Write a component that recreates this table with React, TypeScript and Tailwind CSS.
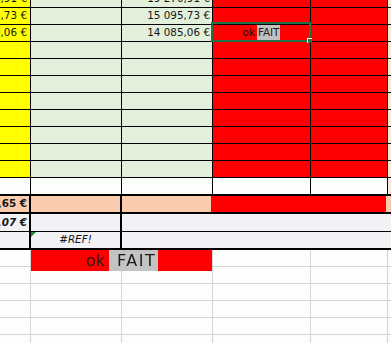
import type { ReactNode } from 'react';

type CellProps = { className?: string; children?: ReactNode };

// plain worksheet cell: fixed width, content clipped at its edges
function Cell({ className = '', children }: CellProps) {
  return (
    <div className={`h-full shrink-0 flex items-center overflow-hidden whitespace-nowrap ${className}`}>
      {children}
    </div>
  );
}

const topRows = [
  { a: '17 795,91 €', c: '19 270,91 €' },
  { a: '8 275,73 €', c: '15 095,73 €' },
  { a: '9 120,06 €', c: '14 085,06 €', selected: true },
  {}, {}, {}, {}, {}, {}, {}, {},
] as { a?: string; c?: string; selected?: boolean }[];

export default function App() {
  return (
    <div className="h-screen overflow-hidden bg-[#fcfefb] font-['DejaVu_Sans',sans-serif] text-[10.4px] text-[#161616]">
      <div className="flex flex-col -mt-[9px]">
        {/* Monthly amounts block */}
        {topRows.map((row, i) => (
          <div key={i} className="flex h-[17px] shrink-0 border-b border-black">
            <Cell className="w-[31px] border-r border-black bg-[#ffff00] justify-end pr-[3px]">{row.a}</Cell>
            <Cell className="w-[91px] border-r border-black bg-[#e2efda]" />
            <Cell className="w-[91px] border-r border-black bg-[#e2efda] justify-end pr-[2px]">{row.c}</Cell>
            <div className="relative h-full w-[98px] shrink-0 border-r border-black bg-[#ff0000] flex items-center justify-center whitespace-nowrap">
              {row.selected && (
                <>
                  <span className="text-[#1a0808]">ok</span>
                  <span className="ml-[2px] bg-[#c0c0c0] px-[1px] text-[#222]">FAIT</span>
                  <div className="absolute -left-[2px] -top-[3px] z-10 h-[20px] w-[100px] border-2 border-[#217346]" />
                  <div className="absolute left-[94px] top-[13px] z-20 h-[5px] w-[5px] border-l border-t border-white bg-[#217346]" />
                </>
              )}
            </div>
            <Cell className="w-[77px] border-r border-black bg-[#ff0000]" />
            <Cell className="flex-1 bg-[#fbe9de]" />
          </div>
        ))}

        {/* blank separator row */}
        <div className="flex h-[18px] shrink-0 border-b-2 border-black bg-[#fcfefb]">
          <Cell className="w-[31px] border-r border-black" />
          <Cell className="w-[91px] border-r border-black" />
          <Cell className="w-[91px] border-r border-black" />
          <Cell className="w-[98px] border-r border-black" />
          <Cell className="w-[77px] border-r border-black" />
          <Cell className="flex-1 bg-[#fbe9de]" />
        </div>

        {/* totals */}
        <div className="flex h-[18px] shrink-0 border-b-2 border-black bg-[#fbcbad]">
          <Cell className="w-[31px] border-r-2 border-black justify-end pr-[2px] font-bold">87 460,65 €</Cell>
          <Cell className="w-[91px] border-r-2 border-black" />
          <Cell className="w-[89px]" />
          <Cell className="w-[175px] bg-[#ff0000]" />
          <Cell className="flex-1" />
        </div>

        <div className="flex h-[18px] shrink-0 border-b border-black bg-[#f2f1f6]">
          <Cell className="w-[31px] border-r-2 border-black justify-end pr-[2px] font-bold italic">64 233,07 €</Cell>
          <Cell className="w-[91px] border-r-2 border-black" />
          <Cell className="flex-1" />
        </div>

        <div className="flex h-[18px] shrink-0 border-b-2 border-black bg-[#f2f1f6]">
          <Cell className="w-[31px] border-r-2 border-black" />
          <div className="relative h-full w-[91px] shrink-0 border-r-2 border-black flex items-center justify-center italic">
            <div className="absolute left-0 top-0 h-0 w-0 border-r-[5px] border-t-[5px] border-r-transparent border-t-[#1f8a2f]" />
            #REF!
          </div>
          <Cell className="flex-1" />
        </div>

        {/* empty sheet below */}
        <div className="relative flex flex-col">
          {Array.from({ length: 6 }).map((_, i) => (
            <div key={i} className="flex h-[17px] shrink-0 border-b border-[#d4d4d4]">
              <Cell className="w-[31px] border-r border-[#d4d4d4]" />
              <Cell className="w-[91px] border-r border-[#d4d4d4]" />
              <Cell className="w-[91px] border-r border-[#d4d4d4]" />
              <Cell className="w-[98px] border-r border-[#d4d4d4]" />
              <Cell className="w-[77px] border-r border-[#d4d4d4]" />
              <Cell className="flex-1" />
            </div>
          ))}

          {/* pasted status label */}
          <div className="absolute left-[31px] top-0 flex h-[21px] w-[181px] bg-[#ff0000] text-[16px] leading-[21px] text-[#1c1c1c]">
            <div className="flex w-[78px] justify-end pr-[4px]">
              <span className="blur-[0.3px]">ok</span>
            </div>
            <div className="w-[49px] bg-[#c3c3c3] pl-[8px]">
              <span className="tracking-[1.5px] blur-[0.3px]">FAIT</span>
            </div>
          </div>
        </div>
      </div>
    </div>
  );
}
